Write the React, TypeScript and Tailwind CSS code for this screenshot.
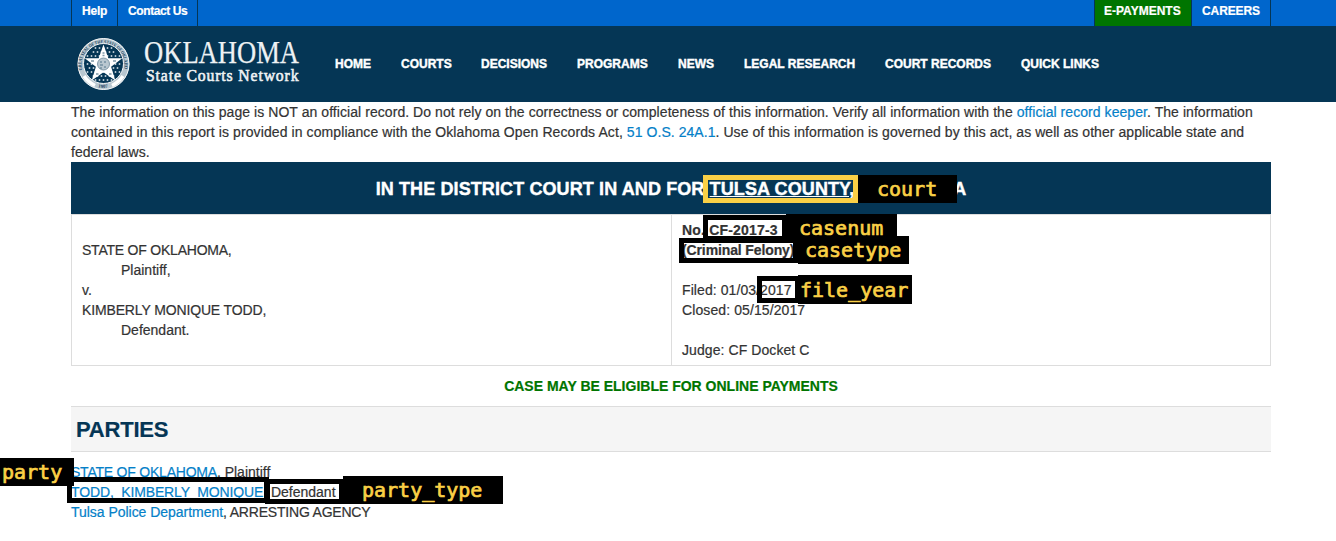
import React from "react";

const nav = [
  { label: "HOME", w: "w-[36px]" },
  { label: "COURTS", w: "w-[50px]" },
  { label: "DECISIONS", w: "w-[66px]" },
  { label: "PROGRAMS", w: "w-[71px]" },
  { label: "NEWS", w: "w-[36px]" },
  { label: "LEGAL RESEARCH", w: "w-[111px]" },
  { label: "COURT RECORDS", w: "w-[106px]" },
  { label: "QUICK LINKS", w: "w-[79px]" },
];

const dots: [number, number][] = [];
for (let r = 0; r < 9; r++) {
  for (let c = 0; c < 9; c++) {
    const x = 11 + c * 4 + (r % 2 ? 2 : 0);
    const y = 11 + r * 4;
    if (Math.hypot(x - 27, y - 27) < 18) dots.push([x, y]);
  }
}

function Seal() {
  return (
    <svg width="54" height="54" viewBox="0 0 54 54" className="overflow-visible">
      <defs>
        <path id="ringTop" d="M6.2 33 A21.4 21.4 0 1 1 47.8 33" />
        <path id="ringBottom" d="M17 48.8 A23.6 23.6 0 0 0 37 48.8" />
      </defs>
      <circle cx="27.500" cy="27" r="25.800" fill="#b9c7d0" />
      <circle cx="27.500" cy="27" r="25.500" fill="none" stroke="#f4f6f7" strokeWidth="1" />
      <text fontSize="5.2" fontFamily="Liberation Serif, serif" fontWeight="bold" fill="#153f5c">
        <textPath href="#ringTop" textLength="82" lengthAdjust="spacingAndGlyphs">
          GREAT SEAL OF THE STATE OF OKLAHOMA
        </textPath>
      </text>
      <path d="M8 39 Q12 45 19 48.500 M47 39 Q43 45 36 48.500" stroke="#fff" strokeWidth="3.400" fill="none" />
      <text fontSize="5" fontFamily="Liberation Serif, serif" fontWeight="bold" fill="#153f5c">
        <textPath href="#ringBottom" startOffset="50%" textAnchor="middle">
          1907
        </textPath>
      </text>
      <circle cx="27.500" cy="26.500" r="20" fill="#053655" stroke="#f4f6f7" strokeWidth="1" />
      {dots.map(([x, y]) => (
        <circle key={`${x}-${y}`} cx={x + 0.5} cy={y} r=".95" fill="#c3d0d8" />
      ))}
      <path
        d="M27.5 7.5 L32.3 21.2 L46.3 21.2 L35.1 29.8 L39.3 43.5 L27.5 35.2 L15.7 43.5 L19.9 29.8 L8.7 21.2 L22.7 21.2 Z"
        fill="#fff"
      />
      <circle cx="27.500" cy="27" r="6" fill="#b9c7d0" stroke="#6b8798" strokeWidth=".8" />
      <path d="M24 25h2m2 0h2m-6 3h3m1 2h2m-6 1h2" stroke="#53748a" strokeWidth="1" />
      <path d="M26.500 16h2M26.500 18.500h2M15 24h3M37 24h3M20 37h2.500M33 37h2.500" stroke="#7f98a7" strokeWidth="1.300" />
    </svg>
  );
}

function Wordmark() {
  return (
    <svg
      width="160"
      height="50"
      viewBox="0 0 160 50"
      fill="#eef2f4"
      stroke="#eef2f4"
      fontFamily="Liberation Serif, serif"
      className="overflow-visible"
    >
      <text x="4" y="28" fontSize="32.500" textLength="155" lengthAdjust="spacingAndGlyphs" strokeWidth=".25">
        OKLAHOMA
      </text>
      <g transform="translate(6 46) scale(.9 1)">
        <text fontSize="17.500" textLength="169.500" lengthAdjust="spacing" strokeWidth=".6">
          State Courts Network
        </text>
      </g>
    </svg>
  );
}

const tag =
  "absolute flex items-center bg-black whitespace-pre font-['DejaVu_Sans_Mono',monospace] text-[20px] leading-none text-[#fad046]";
const outline = "[-webkit-text-stroke:0.7px_#fad046]";
const frame = "absolute border-[5px] border-black";
const link = "text-[#0480c8]";

export default function App() {
  return (
    <div className="relative h-[541px] w-[1336px] overflow-hidden bg-white font-['Liberation_Sans',Arial,sans-serif] text-[14px] leading-5 text-[#333] [-webkit-text-stroke:0.2px]">
      <div className="h-[26px] bg-[#0066cc] pr-[65px] pl-[71px]">
        <div className="flex h-full justify-between text-[12px] leading-[22px] font-bold text-white">
          <div className="flex">
            <span className="w-[47px] border-x border-[#053655] pl-[10px] tracking-[-0.2px]">Help</span>
            <span className="w-[80px] border-r border-[#053655] pl-[10px] tracking-[-0.4px] whitespace-nowrap">
              Contact Us
            </span>
          </div>
          <div className="flex">
            <span className="w-[98px] border-x border-[#053655] bg-[#007500] pl-[9px]">E-PAYMENTS</span>
            <span className="w-[79px] border-r border-[#053655] pl-[10px] tracking-[-0.1px]">CAREERS</span>
          </div>
        </div>
      </div>

      <header className="flex h-[76px] items-center bg-[#053655] pl-[76px]">
        <div className="flex h-[54px] w-[259px] items-start">
          <Seal />
          <div className="-mt-[2px] ml-[10px]">
            <Wordmark />
          </div>
        </div>
        <nav className="flex gap-[30px] text-[12px] leading-5 font-bold text-white [-webkit-text-stroke:0.4px_white]">
          {nav.map((n) => (
            <span key={n.label} className={`${n.w} whitespace-nowrap`}>
              {n.label}
            </span>
          ))}
        </nav>
      </header>

      <main className="ml-[71px] w-[1200px]">
        <p className="whitespace-nowrap">
          <span className="tracking-[0.06px]">
            The information on this page is NOT an official record. Do not rely on the correctness or completeness of
            this information. Verify all information with the <a className={link}>official record keeper</a>. The
            information
          </span>
          <br />
          <span className="tracking-[0.092px]">
            contained in this report is provided in compliance with the Oklahoma Open Records Act,{" "}
          </span>
          <span className="tracking-[0.055px]">
            <a className={link}>51 O.S. 24A.1</a>. Use of this information is governed by this act, as well as other
            applicable state and
          </span>
          <br />
          federal laws.
        </p>

        <h1 className="flex h-[52px] items-center justify-center bg-[#053655] pt-[2px] text-[18px] font-bold tracking-[0.11px] whitespace-pre text-white [-webkit-text-stroke:0.4px]">
          IN THE DISTRICT COURT IN AND FOR <span className="underline">TULSA COUNTY,</span> OKLAHOMA
        </h1>

        <div className="flex h-[152px] border border-[#ddd]">
          <div className="w-[600px] border-r border-[#ddd] px-[10px] pt-[25px]">
            <div className="tracking-[-0.22px]">STATE OF OKLAHOMA,</div>
            <div className="pl-[39px]">Plaintiff,</div>
            <div>v.</div>
            <div className="tracking-[-0.14px]">KIMBERLY MONIQUE TODD,</div>
            <div className="pl-[39px]">Defendant.</div>
          </div>
          <div className="px-[10px] pt-[5px]">
            <div className="font-bold tracking-[0.18px]">No. CF-2017-3</div>
            <div className="font-bold tracking-[-0.12px]">(Criminal Felony)</div>
            <div className="pt-5 tracking-[0.08px]">Filed: 01/03/2017</div>
            <div className="tracking-[0.1px]">Closed: 05/15/2017</div>
            <div className="pt-5 tracking-[0.08px]">Judge: CF Docket C</div>
          </div>
        </div>

        <div className="flex h-10 items-center justify-center font-bold text-[#007500]">
          CASE MAY BE ELIGIBLE FOR ONLINE PAYMENTS
        </div>

        <h2 className="flex h-[46px] items-center border-y border-[#ddd] bg-[#f5f5f5] pt-[2px] pl-[5px] text-[22px] font-bold tracking-[-0.2px] text-[#053655]">
          PARTIES
        </h2>

        <div className="pt-[10px] whitespace-pre">
          <div>
            <a className={`${link} tracking-[-0.22px]`}>STATE OF OKLAHOMA</a>, Plaintiff
          </div>
          <div>
            <a className={`${link} tracking-[-0.13px]`}>{"TODD,  KIMBERLY  MONIQUE"}</a>, Defendant
          </div>
          <div>
            <a className={`${link} tracking-[-0.03px]`}>Tulsa Police Department</a>
            <span className="tracking-[-0.2px]">, ARRESTING AGENCY</span>
          </div>
        </div>
      </main>

      <div className="absolute top-[175px] left-[703px] h-[28px] w-[155px] border-[5px] border-[#fad046]" />
      <div className={`${tag} ${outline} top-[175px] left-[858px] h-[28px] w-[99px] pl-[19px]`}>court</div>

      <div className={`${frame} top-[215px] left-[703px] h-[26px] w-[84px]`} />
      <div className={`${tag} ${outline} top-[214px] left-[786px] h-[28px] w-[111px] pl-[13px]`}>casenum</div>

      <div className={`${frame} top-[238px] left-[679px] h-[25px] w-[119px]`} />
      <div className={`${tag} ${outline} top-[236px] left-[798px] h-[28px] w-[111px] pl-[7px]`}>casetype</div>

      <div className={`${frame} top-[276px] left-[757px] h-[27px] w-[43px]`} />
      <div className={`${tag} ${outline} top-[275px] left-[798px] h-[29px] w-[114px] pl-[2px]`}>file_year</div>

      <div className={`${frame} top-[477px] left-[67px] h-[26px] w-[202px]`} />
      <div className={`${tag} ${outline} top-[458px] left-0 h-[28px] w-[74px] pl-[2px]`}>party</div>

      <div className={`${frame} top-[479px] left-[265px] h-[25px] w-[79px]`} />
      <div className={`${tag} ${outline} top-[476px] left-[343px] h-[28px] w-[160px] pl-[19px]`}>party_type</div>
    </div>
  );
}
